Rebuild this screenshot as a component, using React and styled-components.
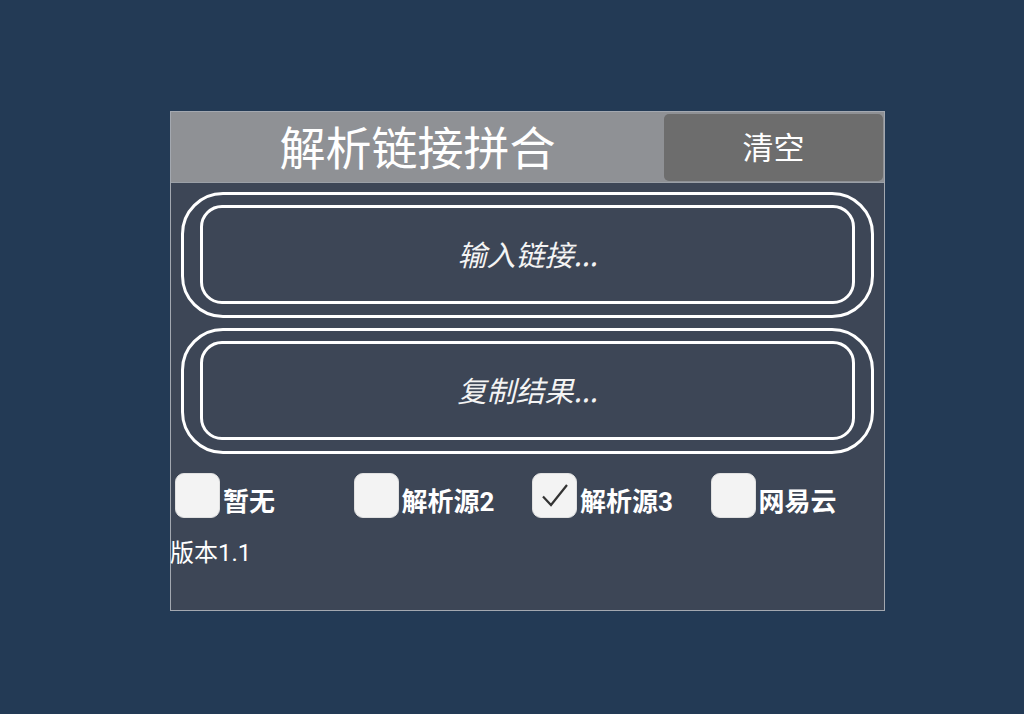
import { createGlobalStyle } from "styled-components";
import styled from "styled-components";

const GlobalStyle = createGlobalStyle`
  html, body {
    margin: 0;
    padding: 0;
    background: #233a55;
    height: 100%;
  }
  body {
    font-family: "Roboto", "Noto Sans CJK SC", sans-serif;
  }
`;

const Page = styled.div`
  padding: 111px 0 0 170px;
`;

const Panel = styled.div`
  width: 713px;
  height: 498px;
  border: 1px solid #a3a8b0;
  background: #3d4656;
  display: flex;
  flex-direction: column;
`;

const Header = styled.div`
  height: 70px;
  background: #8f9195;
  display: flex;
  border-bottom: 1px solid #9ba0a7;
`;

const Title = styled.div`
  flex: 1;
  display: flex;
  align-items: center;
  justify-content: center;
  color: #ffffff;
  font-size: 46px;
  font-weight: 400;
  padding-bottom: 4px;
`;

const ClearButton = styled.button`
  width: 219px;
  margin: 2px 1px 1px 0;
  border: none;
  border-radius: 5px;
  background: #6d6d6d;
  color: #ffffff;
  font-family: inherit;
  font-size: 31px;
  font-weight: 400;
  padding: 0 0 4px;
  cursor: pointer;
`;

const Fields = styled.div`
  display: flex;
  flex-direction: column;
  gap: 10px;
  padding: 9px 10px 0;
`;

const Frame = styled.div`
  box-sizing: border-box;
  height: 126px;
  border: 3px solid #ffffff;
  border-radius: 42px;
  padding: 10px 16px 11px;
  display: flex;
`;

const Field = styled.textarea`
  flex: 1;
  border: 3px solid #ffffff;
  border-radius: 22px;
  background: transparent;
  resize: none;
  outline: none;
  color: #ffffff;
  font-family: "Noto Sans CJK SC", sans-serif;
  font-size: 29px;
  font-style: italic;
  text-align: center;
  padding: 24px 10px 0;
  box-sizing: border-box;
  overflow: hidden;
  &::placeholder {
    color: #f4f4f4;
    opacity: 1;
  }
`;

const Options = styled.div`
  display: grid;
  grid-template-columns: repeat(4, 178.5px);
  padding: 19px 0 0 4px;
`;

const Option = styled.label`
  display: flex;
  align-items: flex-end;
  gap: 3px;
  color: #ffffff;
  font-size: 26px;
  font-weight: 700;
  cursor: pointer;
`;

const Box = styled.span`
  width: 45px;
  height: 45px;
  border-radius: 9px;
  background: #f3f3f3;
  border: 1px solid #e0e0e0;
  box-sizing: border-box;
  display: flex;
  align-items: center;
  justify-content: center;
  flex-shrink: 0;
`;

const OptionText = styled.span`
  line-height: 1;
  padding-bottom: 3px;
`;

const Version = styled.div`
  color: #ffffff;
  font-size: 24px;
  padding: 15px 0 0 0;
  margin-left: -1px;
`;

const options = [
  { label: "暂无", checked: false },
  { label: "解析源2", checked: false },
  { label: "解析源3", checked: true },
  { label: "网易云", checked: false },
];

const Check = () => (
  <svg width="32" height="32" viewBox="0 0 32 32">
    <path d="M4 16.5 L12 25 L28 5" fill="none" stroke="#333" strokeWidth="2.2" />
  </svg>
);

export default function App() {
  return (
    <Page>
      <GlobalStyle />
      <Panel>
        <Header>
          <Title>解析链接拼合</Title>
          <ClearButton>清空</ClearButton>
        </Header>
        <Fields>
          <Frame>
            <Field placeholder="输入链接..." />
          </Frame>
          <Frame>
            <Field placeholder="复制结果..." readOnly />
          </Frame>
        </Fields>
        <Options>
          {options.map((o) => (
            <Option key={o.label}>
              <Box>{o.checked && <Check />}</Box>
              <OptionText>{o.label}</OptionText>
            </Option>
          ))}
        </Options>
        <Version>版本1.1</Version>
      </Panel>
    </Page>
  );
}
